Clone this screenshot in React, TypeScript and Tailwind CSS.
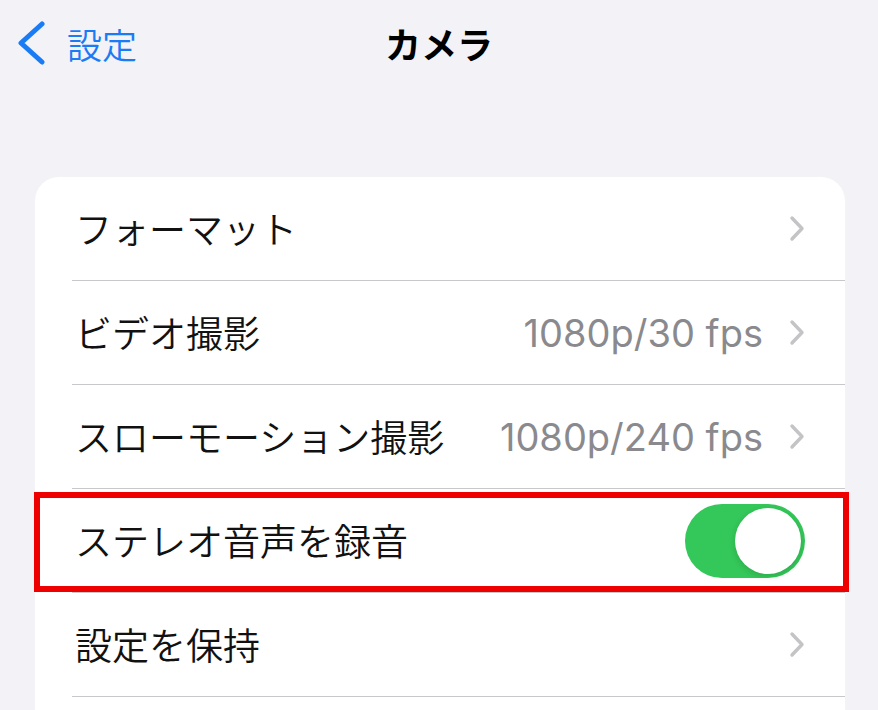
import React from 'react';

type Row = { label: string; value?: string; toggle?: boolean; highlight?: boolean };

const rows: Row[] = [
  { label: 'フォーマット' },
  { label: 'ビデオ撮影', value: '1080p/30 fps' },
  { label: 'スローモーション撮影', value: '1080p/240 fps' },
  { label: 'ステレオ音声を録音', toggle: true, highlight: true },
  { label: '設定を保持' },
  { label: '' },
];

function Chevron() {
  return (
    <svg width="16" height="27" viewBox="0 0 16 27" className="shrink-0">
      <path d="M3 3 L13 13.5 L3 24" fill="none" stroke="#c4c4c7" strokeWidth="3.4" strokeLinecap="round" strokeLinejoin="round" />
    </svg>
  );
}

function Toggle() {
  return (
    <div className="w-[120px] h-[74px] rounded-full bg-[#34c759] p-[4px] flex justify-end items-center">
      <div className="w-[66px] h-[66px] rounded-full bg-white shadow-[0_2px_6px_rgba(0,0,0,0.15)]" />
    </div>
  );
}

export default function App() {
  return (
    <div className="w-[878px] h-[710px] overflow-hidden bg-[#f2f2f7] font-['Inter','Noto_Sans_CJK_JP',sans-serif]">
      {/* Nav bar */}
      <div className="grid grid-cols-[1fr_auto_1fr] items-center h-[86px]">
        <div className="flex items-center pl-[17px] gap-[20px] text-[#1a7cf5]">
          <svg width="30" height="44" viewBox="0 0 30 44">
            <path d="M25 3 L4 22 L25 41" fill="none" stroke="#1a7cf5" strokeWidth="5" strokeLinecap="round" strokeLinejoin="round" />
          </svg>
          <span className="text-[35px] leading-none font-[350] font-['Noto_Sans_CJK_JP',sans-serif]">設定</span>
        </div>
        <span className="text-[36px] leading-none font-bold text-black font-['Noto_Sans_CJK_JP',sans-serif]">カメラ</span>
        <div />
      </div>

      {/* Settings group */}
      <div className="mt-[91px] ml-[35px] w-[810px] bg-white rounded-t-[24px]">
        {rows.map((r, i) => (
          <div key={i} className="relative">
            <div className="flex items-center h-[103px] pl-[40px] pr-[40px]">
              <span className="flex-1 text-[37px] leading-none font-[350] text-[#111] font-['Noto_Sans_CJK_JP',sans-serif]">{r.label}</span>
              {r.value && (
                <span className="text-[38px] leading-none text-[#8a8a8e] mr-[26px]">{r.value}</span>
              )}
              {r.toggle ? <Toggle /> : r.label && <Chevron />}
            </div>
            <div className="ml-[37px] h-px bg-[#c8c8cc]" />
            {r.highlight && (
              <div className="absolute -left-[1px] -right-[4px] top-[3px] bottom-[1px] border-[6px] border-[#ee0000] pointer-events-none" />
            )}
          </div>
        ))}
      </div>
    </div>
  );
}
